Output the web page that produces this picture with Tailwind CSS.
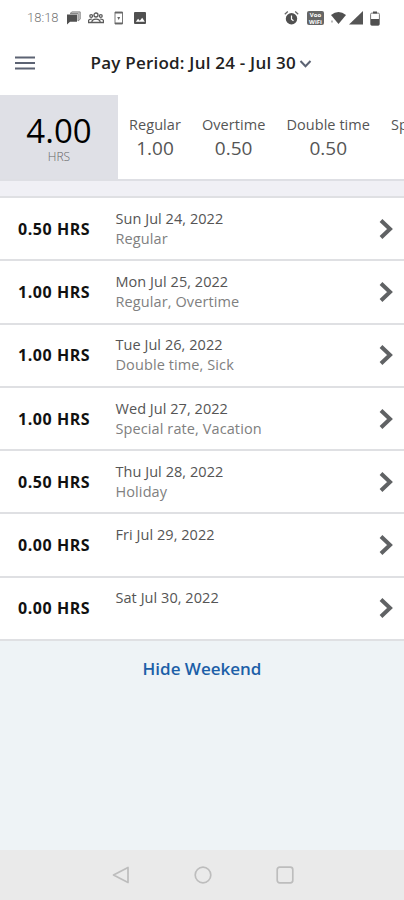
<!DOCTYPE html>
<html lang="en">
  <head>
    <meta charset="UTF-8" />
    <meta name="viewport" content="width=device-width, initial-scale=1.0" />
    <script src="https://cdn.jsdelivr.net/npm/@tailwindcss/browser@4"></script>
    <title>Timesheet</title>
  </head>
  <body class="bg-[#eef3f6] font-['Open_Sans','Noto_Sans',sans-serif] text-black">
    <div class="flex h-[900px] w-[404px] flex-col overflow-hidden">
      <!-- status bar -->
      <div class="flex h-9 shrink-0 items-center bg-white pl-[27px] pr-6 text-[#5c5c5c]">
        <span class="w-10 font-[Roboto] text-[13px] font-light text-[#777]">18:18</span>
        <svg class="h-3.5 w-3.5" viewBox="0 0 14 14">
          <path d="M3 2.500L5 .9h8.200v7.300L11 10V2.500z" fill="#ccc" stroke="#888" stroke-width="1" />
          <path d="M0 3.500h10v7.300H3L0 13.500z" fill="#505050" />
        </svg>
        <svg class="ml-[7px] h-3.5 w-4" viewBox="0 0 16 14" fill="none" stroke="currentColor" stroke-width="1.3">
          <circle cx="8" cy="4" r="2" />
          <circle cx="3.2" cy="5" r="1.4" />
          <circle cx="12.8" cy="5" r="1.4" />
          <path d="M3.8 11.5c0-4.4 8.4-4.4 8.4 0zM.5 11.5V10c0-1.4 1.500-2 3.300-1.800M15.500 11.500V10c0-1.400-1.500-2-3.300-1.800M0 11.500h16" />
        </svg>
        <svg class="ml-2.5 h-3.5 w-2.5" viewBox="0 0 10 14">
          <path d="M1 1h7.500v12H1z" fill="none" stroke="#777" stroke-width="1" />
          <path d="M1 1h7.500v1.500H1zM1 11.500h7.500V13H1zM3.200 6h3L4.700 9z" fill="#666" />
        </svg>
        <svg class="ml-2.5 h-3.5 w-3.5" viewBox="0 0 14 14">
          <rect y="1" width="12" height="12" rx="1" fill="#505050" />
          <path d="M1.800 10.800l2.300-3 1.700 2 2.400-3.100 2.600 4.100z" fill="#fff" />
        </svg>
        <div class="ml-auto flex items-center">
          <svg class="mr-2 h-4 w-[15px]" viewBox="0 0 15 16" fill="none">
            <circle cx="7.500" cy="8.800" r="5.700" fill="#505050" />
            <path d="M.8 4.200l3-2.700M14.200 4.200l-3-2.700" stroke="#666" stroke-width="1.300" />
            <path d="M7.500 5.500v3.600l2 1.700" stroke="#fff" stroke-width="1.200" />
          </svg>
          <svg class="mr-[7px] h-3.5 w-[17px]" viewBox="0 0 17 14">
            <rect width="17" height="14" rx="2" fill="#666" />
            <text x="8.500" y="6.300" text-anchor="middle" font-size="6" font-weight="700" fill="#fff">Voo</text>
            <text x="8.500" y="12.500" text-anchor="middle" font-size="6" font-weight="700" fill="#fff">WiFi</text>
          </svg>
          <svg class="mr-[3px] h-3.5 w-[15px]" viewBox="0 0 15 14" fill="#505050">
            <path d="M0 4Q7.500-2.200 15 4L7.500 13z" />
            <path d="M0 9.500h2v2H0z" fill="#bbb" />
          </svg>
          <svg class="mr-[7px] h-3.5 w-3.5" viewBox="0 0 14 14" fill="#555">
            <path d="M14 0v13.500H0z" />
          </svg>
          <svg class="h-[15px] w-2.5" viewBox="0 0 10 15">
            <rect x=".6" y="2.100" width="8.800" height="12.300" rx="1.200" fill="#fff" stroke="#777" />
            <path d="M3 .5h4v2H3zM1 8h8v6H1z" fill="#505050" />
          </svg>
        </div>
      </div>

      <!-- header -->
      <div class="flex h-[59px] shrink-0 items-center bg-white pb-[5px] pl-[15px]">
        <svg class="h-4 w-5" viewBox="0 0 20 16" stroke="#5c6373" stroke-width="2">
          <path d="M0 2.500h20M0 8h20M0 13.500h20" />
        </svg>
        <button class="ml-[55.500px] flex items-center whitespace-nowrap text-[17px] font-semibold tracking-[0.22px] text-[#222]">
          <span>Pay Period: Jul 24 - Jul 30</span>
          <svg class="mt-0.5 ml-[3px] h-2.5 w-[13px]" viewBox="0 0 12 10" fill="none" stroke="#5c6373" stroke-width="2">
            <path d="M1 2l5 5.300L11 2" />
          </svg>
        </button>
      </div>

      <!-- hour totals -->
      <div class="flex h-[86px] shrink-0 border-b-2 border-[#dedfe4] bg-white">
        <div class="flex w-[118px] shrink-0 flex-col items-center bg-[#dfe0e6] pt-[18px]">
          <div class="text-[33px] leading-9">4.00</div>
          <div class="text-xs leading-[15px] font-light text-[#666]">HRS</div>
        </div>
        <div class="flex gap-[21px] overflow-hidden pt-[19px] pl-[11px] text-center whitespace-nowrap text-[#555]">
          <div>
            <div class="text-[14.5px] leading-[22px] tracking-[0.06px]">Regular</div>
            <div class="text-[19px] leading-6">1.00</div>
          </div>
          <div>
            <div class="text-[14.5px] leading-[22px] tracking-[0.06px]">Overtime</div>
            <div class="text-[19px] leading-6">0.50</div>
          </div>
          <div>
            <div class="text-[14.5px] leading-[22px] tracking-[0.06px]">Double time</div>
            <div class="text-[19px] leading-6">0.50</div>
          </div>
          <div>
            <div class="text-[14.5px] leading-[22px] tracking-[0.06px]">Special rate</div>
          </div>
        </div>
      </div>
      <div class="h-[15px] shrink-0 bg-[#f0f0f5]"></div>

      <!-- days, filled below -->
      <div id="days" class="shrink-0 border-t-2 border-[#dfe0e3] bg-white"></div>

      <button class="mt-4 text-[17px] leading-6 font-semibold text-[#1c5fa8]">Hide Weekend</button>

      <!-- navigation bar -->
      <div class="mt-auto flex h-[50px] shrink-0 items-center justify-center gap-16 bg-[#eaeaea] pl-px">
        <svg class="h-[18px] w-[18px]" viewBox="0 0 18 18" fill="none" stroke="#bdbdbd" stroke-width="1.700" stroke-linejoin="round">
          <path d="M16 1.500v15L1.500 9z" />
        </svg>
        <svg class="h-[18px] w-[18px]" viewBox="0 0 18 18" fill="none" stroke="#bdbdbd" stroke-width="1.700">
          <circle cx="9" cy="9" r="7.800" />
        </svg>
        <svg class="h-[18px] w-[18px]" viewBox="0 0 18 18" fill="none" stroke="#bdbdbd" stroke-width="1.700">
          <rect x="1.200" y="1.200" width="15.600" height="15.600" rx="2.500" />
        </svg>
      </div>
    </div>

    <script>
      const days = [
        ["0.50", "Sun Jul 24, 2022", "Regular"],
        ["1.00", "Mon Jul 25, 2022", "Regular, Overtime"],
        ["1.00", "Tue Jul 26, 2022", "Double time, Sick"],
        ["1.00", "Wed Jul 27, 2022", "Special rate, Vacation"],
        ["0.50", "Thu Jul 28, 2022", "Holiday"],
        ["0.00", "Fri Jul 29, 2022", ""],
        ["0.00", "Sat Jul 30, 2022", ""],
      ];

      document.getElementById("days").innerHTML = days
        .map(
          ([hours, date, types]) => `
          <div class="flex h-[63.3px] items-center border-b-2 border-[#dfe0e3] pl-[18px] pr-[10px]">
            <div class="w-[97.5px] text-base font-bold tracking-[0.55px] text-[#111]">${hours} HRS</div>
            <div class="h-10 flex-1 text-[14.5px] leading-5 tracking-[0.05px] text-[#555]">
              <div>${date}</div>
              <div class="tracking-[0.1px] text-[#808080]">${types}</div>
            </div>
            <svg class="h-5 w-[15px]" viewBox="0 0 15 20" fill="none" stroke="#606264" stroke-width="4">
              <path d="M2 1.500L11 10L2 18.500" />
            </svg>
          </div>`
        )
        .join("");
    </script>
  </body>
</html>
